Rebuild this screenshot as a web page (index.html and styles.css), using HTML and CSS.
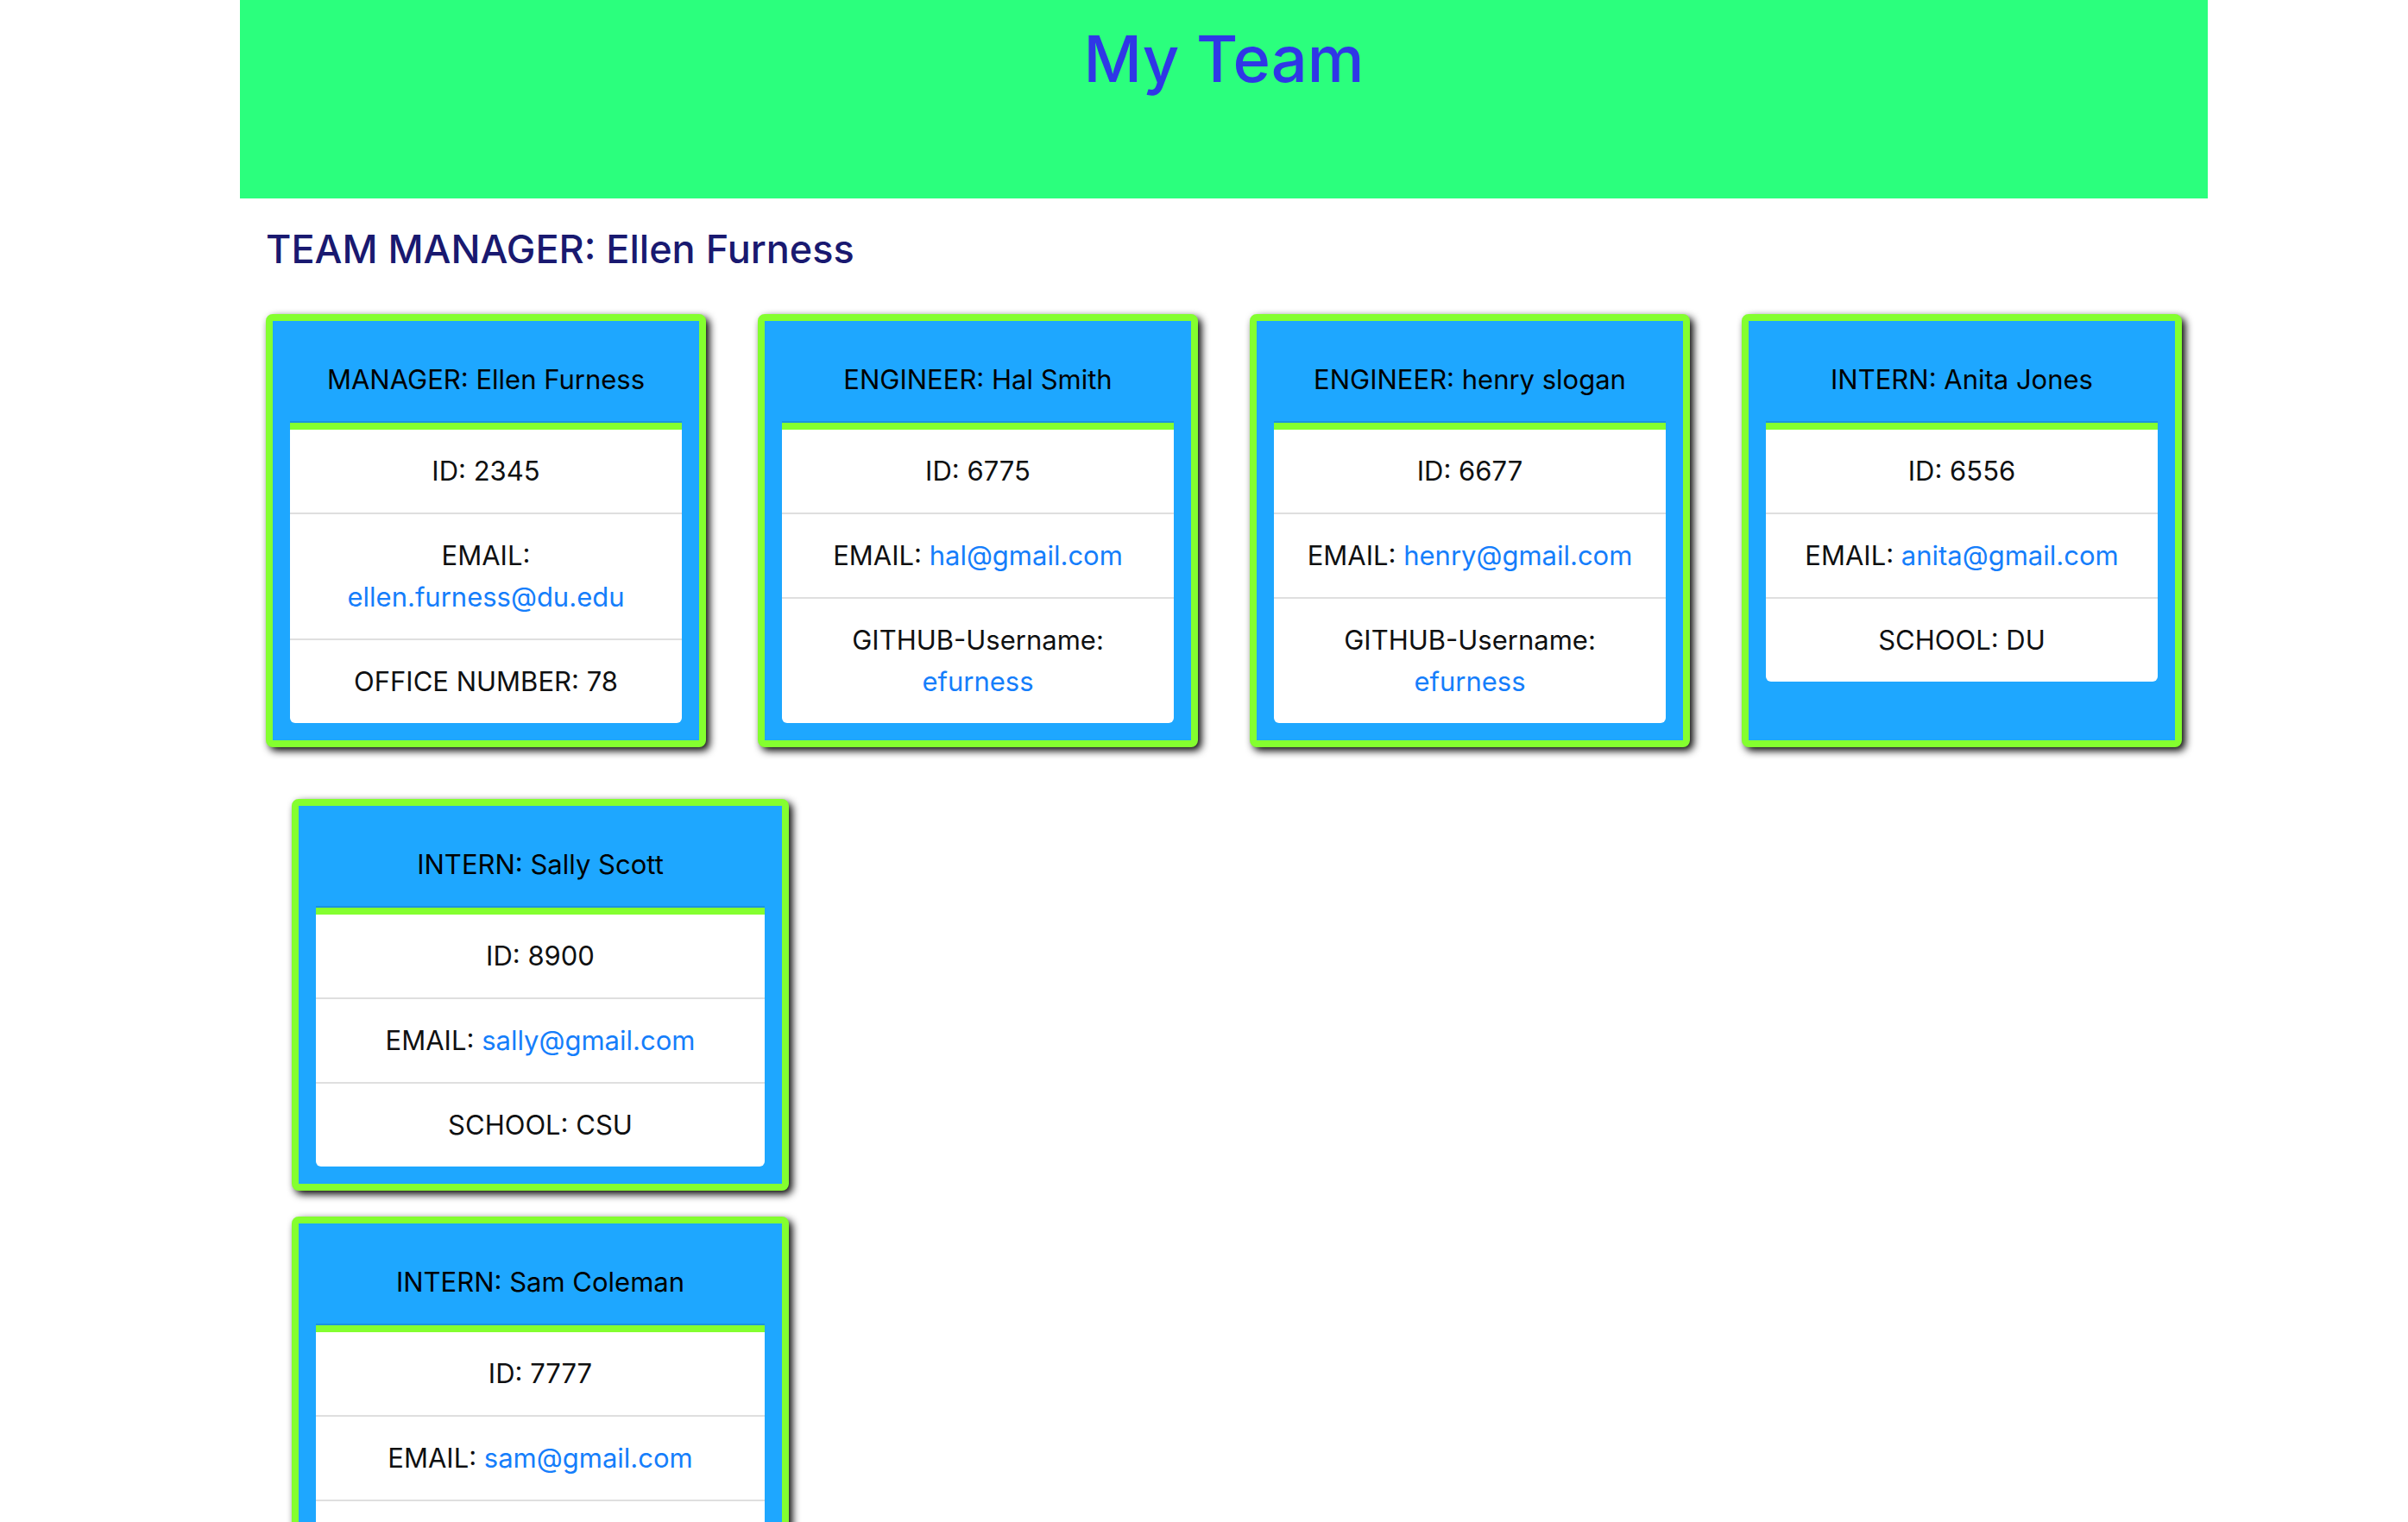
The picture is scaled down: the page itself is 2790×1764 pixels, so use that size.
FILE: index.html
```
<!DOCTYPE html>
<html lang="en">
<head>
<meta charset="utf-8">
<meta name="viewport" content="width=device-width, initial-scale=1">
<title>My Team</title>
<link rel="stylesheet" href="styles.css">
</head>
<body>
<div class="container">
  <header class="banner">
    <h1 class="banner-title">My Team</h1>
  </header>
  <main class="content">
    <h2 class="team-title">TEAM MANAGER: Ellen Furness</h2>
    <div class="team-row">
      <section class="card">
        <h3 class="card-header">MANAGER: Ellen Furness</h3>
        <ul class="card-list">
          <li class="card-item">ID: 2345</li>
          <li class="card-item">EMAIL: <a class="link" href="mailto:ellen.furness@du.edu">ellen.furness@du.edu</a></li>
          <li class="card-item">OFFICE NUMBER: 78</li>
        </ul>
      </section>
      <section class="card">
        <h3 class="card-header">ENGINEER: Hal Smith</h3>
        <ul class="card-list">
          <li class="card-item">ID: 6775</li>
          <li class="card-item">EMAIL: <a class="link" href="mailto:hal@gmail.com">hal@gmail.com</a></li>
          <li class="card-item">GITHUB-Username: <a class="link" href="https://github.com/efurness">efurness</a></li>
        </ul>
      </section>
      <section class="card">
        <h3 class="card-header">ENGINEER: henry slogan</h3>
        <ul class="card-list">
          <li class="card-item">ID: 6677</li>
          <li class="card-item">EMAIL: <a class="link" href="mailto:henry@gmail.com">henry@gmail.com</a></li>
          <li class="card-item">GITHUB-Username: <a class="link" href="https://github.com/efurness">efurness</a></li>
        </ul>
      </section>
      <section class="card">
        <h3 class="card-header">INTERN: Anita Jones</h3>
        <ul class="card-list">
          <li class="card-item">ID: 6556</li>
          <li class="card-item">EMAIL: <a class="link" href="mailto:anita@gmail.com">anita@gmail.com</a></li>
          <li class="card-item">SCHOOL: DU</li>
        </ul>
      </section>
    </div>
    <div class="team-stack">
      <section class="card">
        <h3 class="card-header">INTERN: Sally Scott</h3>
        <ul class="card-list">
          <li class="card-item">ID: 8900</li>
          <li class="card-item">EMAIL: <a class="link" href="mailto:sally@gmail.com">sally@gmail.com</a></li>
          <li class="card-item">SCHOOL: CSU</li>
        </ul>
      </section>
      <section class="card">
        <h3 class="card-header">INTERN: Sam Coleman</h3>
        <ul class="card-list">
          <li class="card-item">ID: 7777</li>
          <li class="card-item">EMAIL: <a class="link" href="mailto:sam@gmail.com">sam@gmail.com</a></li>
          <li class="card-item"></li>
        </ul>
      </section>
    </div>
  </main>
</div>
</body>
</html>
```
FILE: styles.css
```
* {
  box-sizing: border-box;
}

body {
  margin: 0;
  background: #fff;
  color: #0f1011;
  font-family: Inter, "Liberation Sans", sans-serif;
  font-size: 31px;
  line-height: 48px;
}

.container {
  max-width: 2558px;
  padding-left: 278px;
}

.banner {
  min-height: 230px;
  padding: 20px 30px;
  background: #2bff7d;
  text-align: center;
}

.banner-title {
  margin: 0;
  color: #2f37e6;
  font-size: 74px;
  font-weight: 500;
  line-height: 96px;
}

.content {
  padding: 30px;
}

.team-title {
  margin: 0 0 46px;
  color: #191970;
  font-size: 45px;
  font-weight: 500;
  line-height: 58px;
}

.team-row {
  display: grid;
  grid-template-columns: repeat(4, minmax(0, 1fr));
  gap: 60px;
}

.team-stack {
  display: grid;
  gap: 30px;
  max-width: 606px;
  padding: 60px 0 30px 30px;
}

.card {
  padding: 20px;
  border: 8px solid #84ff2f;
  border-radius: 8px;
  background: #1ea7ff;
  box-shadow: 4px 4px 10px #000;
  text-align: center;
}

.card-header {
  margin: 0;
  padding: 24px 0;
  border-bottom: 2px solid #1b92df;
  color: #000;
  font-size: 31px;
  font-weight: 400;
}

.card-list {
  margin: 0;
  padding: 0;
  border-top: 8px solid #84ff2f;
  border-radius: 0 0 6px 6px;
  background: #fff;
  list-style: none;
}

.card-item {
  padding: 24px 32px;
}

.card-item + .card-item {
  border-top: 2px solid #dfdfdf;
}

.link {
  color: #157efb;
  text-decoration: none;
}
```
